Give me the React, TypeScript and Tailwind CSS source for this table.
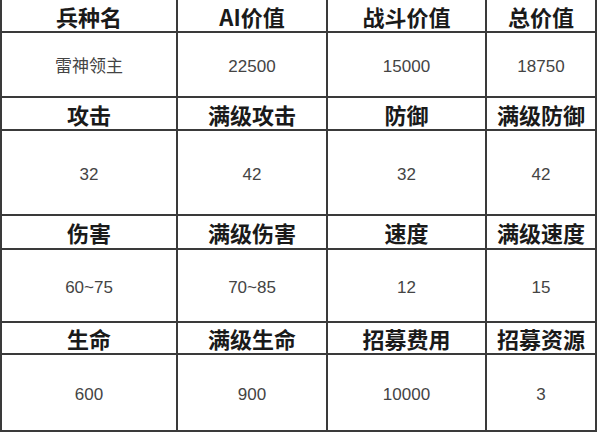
import React from 'react'

// Unit stats sheet: header rows (bold) alternate with value rows
const rows: { head: string[]; values: string[]; h: string; vh: string }[] = [
  { head: ['兵种名', 'AI价值', '战斗价值', '总价值'], values: ['雷神领主', '22500', '15000', '18750'], h: 'h-[31px]', vh: 'h-[63px]' },
  { head: ['攻击', '满级攻击', '防御', '满级防御'], values: ['32', '42', '32', '42'], h: 'h-[31px]', vh: 'h-[83px]' },
  { head: ['伤害', '满级伤害', '速度', '满级速度'], values: ['60~75', '70~85', '12', '15'], h: 'h-[32px]', vh: 'h-[71px]' },
  { head: ['生命', '满级生命', '招募费用', '招募资源'], values: ['600', '900', '10000', '3'], h: 'h-[30px]', vh: 'h-[75px]' },
]

const headFont = { fontFamily: '"Noto Sans CJK SC", sans-serif' }
const valueFont = { fontFamily: '"Liberation Sans", "Noto Sans CJK SC", sans-serif' }

const App = () => {
  return (
    <div className="w-[600px] h-[434px] bg-white overflow-hidden">
      <div className="w-[597px] grid grid-cols-[174px_148px_157px_108px] gap-[2px] bg-[#3a3a3a] pl-[2px] pr-[2px] pb-[2px]">
        {rows.map((r, i) => (
          <React.Fragment key={i}>
            {r.head.map((t) => (
              <div
                key={'h' + t}
                className={`${r.h} bg-white flex items-center justify-center text-[22px] font-bold text-[#1a1a1a] leading-none`}
                style={headFont}
              >
                {t}
              </div>
            ))}
            {r.values.map((t, j) => (
              <div
                key={'v' + j}
                className={`${r.vh} bg-white flex items-center justify-center pt-[3px] text-[17px] text-[#444] leading-none`}
                style={valueFont}
              >
                {t}
              </div>
            ))}
          </React.Fragment>
        ))}
      </div>
    </div>
  )
}

export default App
